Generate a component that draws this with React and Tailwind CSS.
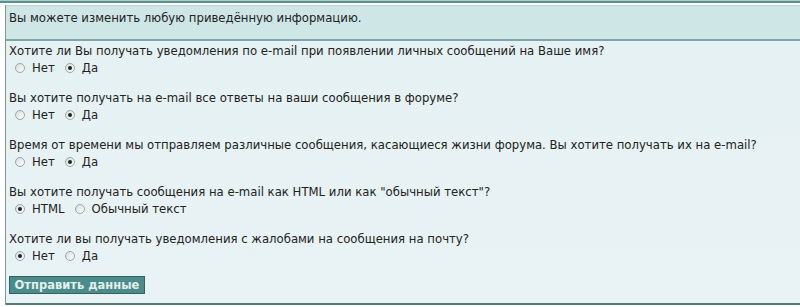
import React, { useState } from 'react';

const questions = [
  {
    name: 'notify_pm',
    text: 'Хотите ли Вы получать уведомления по e-mail при появлении личных сообщений на Ваше имя?',
    options: ['Нет', 'Да'],
    value: 'Да',
  },
  {
    name: 'notify_replies',
    text: 'Вы хотите получать на e-mail все ответы на ваши сообщения в форуме?',
    options: ['Нет', 'Да'],
    value: 'Да',
  },
  {
    name: 'forum_news',
    text: 'Время от времени мы отправляем различные сообщения, касающиеся жизни форума. Вы хотите получать их на e-mail?',
    options: ['Нет', 'Да'],
    value: 'Да',
  },
  {
    name: 'mail_format',
    text: 'Вы хотите получать сообщения на e-mail как HTML или как "обычный текст"?',
    options: ['HTML', 'Обычный текст'],
    value: 'HTML',
  },
  {
    name: 'reports',
    text: 'Хотите ли вы получать уведомления с жалобами на сообщения на почту?',
    options: ['Нет', 'Да'],
    value: 'Нет',
  },
];

// old-school XP style radio
const Radio = ({ checked, onClick }) => (
  <span
    onClick={onClick}
    className="inline-flex items-center justify-center w-[10px] h-[10px] rounded-full border border-[#9aa5a8] bg-gradient-to-br from-[#d8dddd] to-white cursor-pointer"
  >
    {checked && <span className="w-[4px] h-[4px] rounded-full bg-[#222]" />}
  </span>
);

const App = () => {
  const [values, setValues] = useState(
    Object.fromEntries(questions.map((q) => [q.name, q.value]))
  );

  return (
    <div
      className="w-[800px] h-[307px] bg-white text-[11.7px] text-[#222]"
      style={{ fontFamily: '"DejaVu Sans", Verdana, sans-serif' }}
    >
      <div className="h-[1px] bg-[#a8cfd0]" />
      <div className="h-[2px] bg-[#5e8e8e]" />
      <div className="ml-[5px] mt-[2px] border-l border-[#7f9597]">
        <div className="h-[36px] bg-[#cfe6e7] border-t border-[#b5d3d4] border-b-2 border-b-[#7ea6a6] pl-[3px] pt-[5px] leading-[14px]">
          Вы можете изменить любую приведённую информацию.
        </div>
        <div className="bg-gradient-to-b from-[#e6f1f3] to-[#e9f3f5] border-b-2 border-[#4f7b7a] pl-[3px] pt-[3px] pb-[8px]">
          {questions.map((q, i) => (
            <div key={q.name} className={i === questions.length - 1 ? 'mb-[12px]' : 'mb-[15px]'}>
              <div className="leading-[14px]">{q.text}</div>
              <div className="flex items-center h-[17px] mt-[1px] pl-[6px] leading-[14px]">
                {q.options.map((opt) => (
                  <label key={opt} className="flex items-center mr-[10px] cursor-pointer">
                    <Radio
                      checked={values[q.name] === opt}
                      onClick={() => setValues({ ...values, [q.name]: opt })}
                    />
                    <span className="ml-[7px]">{opt}</span>
                  </label>
                ))}
              </div>
            </div>
          ))}
          <button className="h-[18px] w-[136px] bg-[#4b8b89] border border-[#2f6463] text-[#e2f0ef] font-bold text-[11.5px] leading-[14px]">
            Отправить данные
          </button>
        </div>
      </div>
    </div>
  );
};

export default App;
